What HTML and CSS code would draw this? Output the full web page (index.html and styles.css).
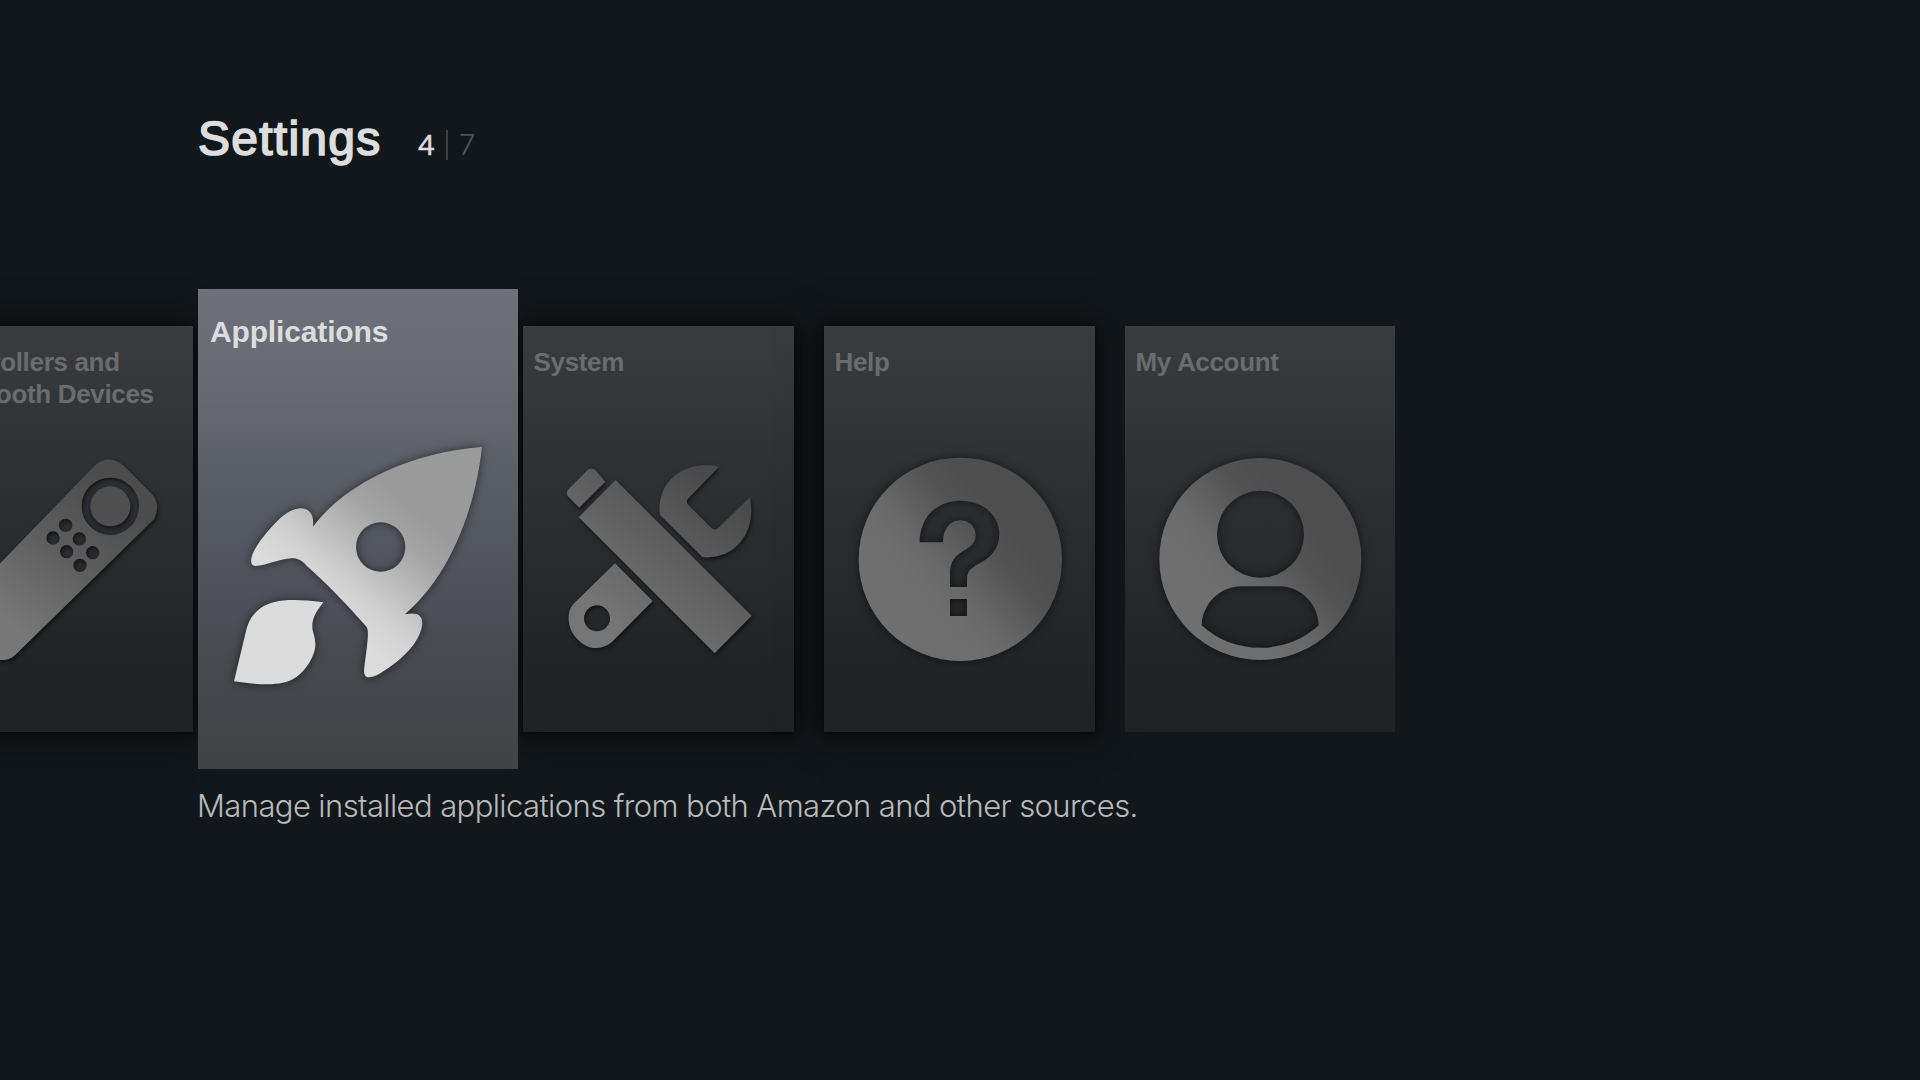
FILE: index.html
```html
<!DOCTYPE html>
<html lang="en">
<head>
<meta charset="utf-8">
<title>Settings</title>
<link rel="stylesheet" href="styles.css">
</head>
<body>
<svg class="defs" width="0" height="0" aria-hidden="true">
  <defs>
    <linearGradient id="metal" gradientUnits="userSpaceOnUse" x1="340" y1="870" x2="600" y2="650">
      <stop offset="0" stop-color="#6f6f6f"/><stop offset=".3" stop-color="#696969"/><stop offset=".75" stop-color="#535353"/><stop offset="1" stop-color="#4e4e4e"/>
    </linearGradient>
    <linearGradient id="tools" gradientUnits="userSpaceOnUse" x1="300" y1="960" x2="620" y2="560">
      <stop offset="0" stop-color="#757575"/><stop offset=".5" stop-color="#606060"/><stop offset="1" stop-color="#4a4a4a"/>
    </linearGradient>
    <linearGradient id="remote" gradientUnits="userSpaceOnUse" x1="20" y1="960" x2="330" y2="560">
      <stop offset="0" stop-color="#777"/><stop offset=".55" stop-color="#5c5c5c"/><stop offset="1" stop-color="#4c4c4c"/>
    </linearGradient>
    <linearGradient id="silver" gradientUnits="userSpaceOnUse" x1="380" y1="980" x2="650" y2="665">
      <stop offset="0" stop-color="#dcdcdc"/><stop offset=".25" stop-color="#d2d2d2"/><stop offset=".8" stop-color="#a2a2a2"/><stop offset="1" stop-color="#9b9b9b"/>
    </linearGradient>
  </defs>
</svg>
<main class="screen">
  <header class="header">
    <h1 class="title">Settings</h1>
    <div class="count"><span class="current">4</span><span class="bar"></span><span class="total">7</span></div>
  </header>

  <section class="row">
    <article class="card">
      <h2 class="name">Controllers and<br>Bluetooth Devices</h2>
      <svg class="icon tight" viewBox="-234 420 813 720">
        <path fill="url(#remote)" fill-rule="evenodd" d="M-118 912L285 496Q325 461 370 496L455 581Q484 614 462 658L45 1066Q30 1080 10 1080H0Q-16 1080 -30 1068L-118 980Q-145 946 -118 912Z
          M245 619a86 86 0 1 0 172 0a86 86 0 1 0-172 0Z
          M177 676a20 20 0 1 0 40 0a20 20 0 1 0-40 0Z
          M139 714a20 20 0 1 0 40 0a20 20 0 1 0-40 0Z
          M218 717a20 20 0 1 0 40 0a20 20 0 1 0-40 0Z
          M180 755a20 20 0 1 0 40 0a20 20 0 1 0-40 0Z
          M258 758a20 20 0 1 0 40 0a20 20 0 1 0-40 0Z
          M220 796a20 20 0 1 0 40 0a20 20 0 1 0-40 0Z"/>
        <circle cx="331" cy="619" r="60" fill="#4f4f4f"/>
      </svg>
    </article>

    <article class="card selected">
      <h2 class="name">Applications</h2>
      <svg class="icon soft" viewBox="24 440 960 840">
        <path fill="url(#silver)" fill-rule="evenodd" d="M876 500C855 690 780 885 645 1002C680 995 697 1003 697 1030C690 1095 620 1150 560 1185C535 1196 522 1192 522 1172C527 1120 540 1055 530 1040C460 960 410 910 350 856C335 840 322 833 305 834C265 837 228 856 197 857C184 856 182 846 184 834C192 800 225 760 262 722C290 694 315 683 335 684C360 686 373 705 369 739C470 604 670 515 876 500Z
          M498 800a74 74 0 1 0 148 0a74 74 0 1 0-148 0Z"/>
        <path fill="#dcdcdc" d="M400 966C300 953 250 958 212 983Q180 1006 170 1044L132 1203C225 1217 280 1215 313 1194C350 1172 378 1120 376 1090C376 1066 366 1056 367 1034C368 1010 382 990 400 966Z"/>
      </svg>
    </article>

    <article class="card">
      <h2 class="name">System</h2>
      <svg class="icon tight" viewBox="39 420 813 720">
        <g fill="url(#tools)">
          <path d="M235 508Q243 504 254 508L286 545L208 623L172 587Q168 578 173 570Z"/>
          <path d="M317 540L725 947L614 1060L206 652Z"/>
          <path d="M627 500L533 598Q528 606 533 613L605 685Q614 692 624 685L719 592C740 680 690 780 578 772L450 645C436 560 510 475 627 500Z"/>
          <path fill-rule="evenodd" d="M315 790L428 903L306 1026C275 1052 235 1050 207 1022C174 996 165 940 190 912Z
            M222 955a39 39 0 1 0 78 0a39 39 0 1 0-78 0Z"/>
        </g>
      </svg>
    </article>

    <article class="card">
      <h2 class="name">Help</h2>
      <svg class="icon soft" viewBox="72 420 813 720">
        <path fill="url(#metal)" fill-rule="evenodd" d="M176 778a305 305 0 1 0 610 0a305 305 0 1 0-610 0Z
          M359 727C360 645 415 602 485 602C553 604 598 648 598 702C597 747 573 770 545 786C515 803 501 812 501 836V861H450V820C451 772 476 762 505 743C523 731 527 718 527 704C525 677 505 661 481 661C450 661 429 688 429 727Z
          M450 897H501V948H450Z"/>
      </svg>
    </article>

    <article class="card flat">
      <h2 class="name">My Account</h2>
      <svg class="icon soft" viewBox="75 420 813 720">
        <path fill="url(#metal)" fill-rule="evenodd" d="M178 777a303 303 0 1 0 606 0a303 303 0 1 0-606 0Z
          M351 703a130.500 130.500 0 1 0 261 0a130.500 130.500 0 1 0-261 0Z
          M425 859H538C602 859 655 912 656 976C560 1066 400 1066 305 976C307 910 362 859 425 859Z"/>
      </svg>
    </article>
  </section>

  <p class="description">Manage installed applications from both Amazon and other sources.</p>
</main>
</body>
</html>
```
FILE: styles.css
```css
* { box-sizing: border-box; }

body {
  margin: 0;
  overflow: hidden;
  background: #12171b;
  font-family: "Liberation Sans", Arial, sans-serif;
}

.defs { display: block; }

.screen {
  width: 1920px;
  height: 1080px;
  overflow: hidden;
}

.header {
  display: flex;
  align-items: baseline;
  height: 289px;
  padding: 111px 0 0 198px;
}

.title {
  margin: 0;
  width: 220px;
  font-size: 48px;
  line-height: 56px;
  font-weight: 400;
  letter-spacing: 1.25px;
  color: #dcddde;
  -webkit-text-stroke: 1.7px #dcddde;
}

.count {
  display: flex;
  align-items: baseline;
  font-size: 30px;
  line-height: 30px;
}

.current {
  width: 28px;
  color: #dcddde;
  -webkit-text-stroke: .4px #dcddde;
}

.bar {
  align-self: flex-end;
  width: 2px;
  height: 30px;
  margin-right: 11px;
  background: #3d4042;
}

.total {
  font-family: Inter, sans-serif;
  font-weight: 300;
  font-size: 29px;
  color: #505355;
}

.row {
  display: flex;
  align-items: center;
  gap: 30px;
  height: 480px;
  margin-left: -78px;
}

.card {
  flex: none;
  display: flex;
  flex-direction: column;
  justify-content: space-between;
  width: 271px;
  height: 406px;
  padding: 20px 0 52px;
  background: linear-gradient(#393b3e, #34373a 18%, #2f3033 35%, #292a2e 58%, #222325 85%, #202123);
  box-shadow: 0 0 6px rgba(0, 0, 0, .5), 0 2px 32px 4px rgba(0, 0, 0, .58);
}

.card.flat { width: 270px; box-shadow: none; }

.name {
  margin: 0;
  padding-left: 10.5px;
  font-size: 26px;
  line-height: 32px;
  letter-spacing: -.33px;
  white-space: nowrap;
  color: #6b6c6e;
}

.icon {
  display: block;
  flex: none;
  width: 271px;
  height: 240px;
  margin-top: -60px;
}

.soft { filter: drop-shadow(0 0 5px rgba(0, 0, 0, .55)); }
.tight { filter: drop-shadow(1px 2px 2px rgba(0, 0, 0, .6)); }

.card.selected {
  z-index: 1;
  width: 320px;
  height: 480px;
  margin: 0 -25px;
  padding: 27px 0 62px;
  background: linear-gradient(#6e7179, #666971 22%, #585c65 42%, #4c4f58 68%, #45484c 80%, #404246);
  box-shadow: none;
}

.selected .name {
  padding-left: 12px;
  font-size: 30px;
  letter-spacing: -.15px;
  color: #dcddde;
}

.selected .icon {
  width: 320px;
  height: 280px;
}

.description {
  margin: 18px 0 0 197px;
  font-family: Inter, sans-serif;
  font-size: 31px;
  line-height: 38px;
  font-weight: 300;
  letter-spacing: -.6px;
  white-space: nowrap;
  color: #b8babc;
}
```
